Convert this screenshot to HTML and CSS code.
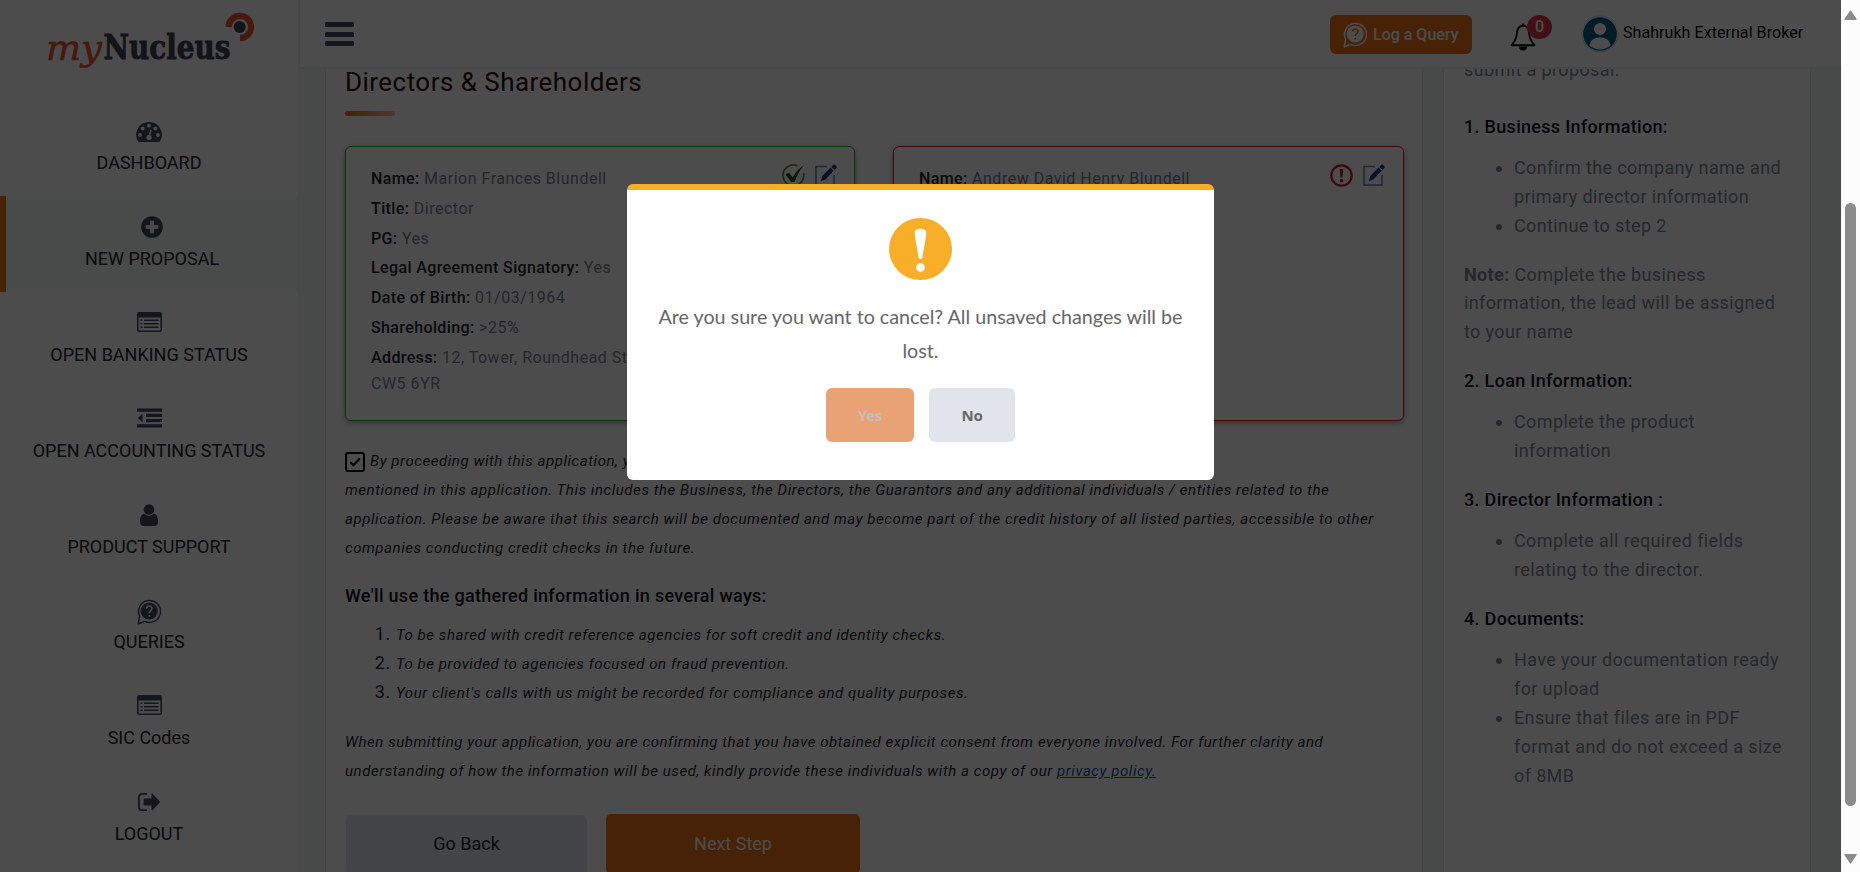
FILE: index.html
```html
<!DOCTYPE html>
<html lang="en">
<head>
<meta charset="utf-8">
<title>myNucleus - New Proposal</title>
<link rel="stylesheet" href="styles.css">
</head>
<body>
<svg class="sprite" width="0" height="0" aria-hidden="true">
  <symbol id="i-list" viewBox="0 0 25 20">
    <path fill-rule="evenodd" d="M2 0h21a2 2 0 0 1 2 2v16a2 2 0 0 1-2 2H2a2 2 0 0 1-2-2V2a2 2 0 0 1 2-2zM1.600 5.600v12.100c0 .4.3.7.7.7h20.400c.4 0 .7-.3.7-.7V5.600z"/>
    <path d="M3.500 7.500h2v1.500h-2zM7 7.500h14.500v1.500H7zM3.500 11h2v1.500h-2zM7 11h14.500v1.500H7zM3.500 14.500h2V16h-2zM7 14.500h14.500V16H7z"/>
  </symbol>
  <symbol id="i-query" viewBox="0 0 24 26">
    <path d="M2.600 17.200A11 11 0 1 1 7.800 22.400L1.300 24.700z" fill="none" stroke="currentColor" stroke-width="1.500" stroke-linejoin="round"/>
    <circle cx="12.200" cy="12" r="8.600"/>
    <path class="q-mark" d="M9.500 9.700c0-3.600 5.600-3.500 5.400-.2-.1 2-2.500 2.200-2.600 4.600M12.300 16v1.800" fill="none" stroke-width="1.600"/>
  </symbol>
  <symbol id="i-edit" viewBox="0 0 22 22">
    <path d="M12 2.500H1v18.600h18V11" fill="none" stroke="#5b7fc0" stroke-width="1.500"/>
    <path fill="#143c93" d="M6 17.200l1.100-4.900 8.400-8.800 3.300 3.200-8.500 8.900zM16.300 2.700L18 1c.8-.8 1.500-.7 2.300 0l.9.900c.8.800.7 1.500 0 2.300l-1.700 1.700z"/>
  </symbol>
</svg>

<div class="window">
  <div class="app">
    <aside class="sidebar">
      <div class="brand">
        <svg width="190" height="70" viewBox="0 0 190 70">
          <text x="6" y="53.500" class="brand-my" textLength="56" lengthAdjust="spacingAndGlyphs">my</text>
          <text x="63.500" y="53" class="brand-name" textLength="127" lengthAdjust="spacingAndGlyphs">Nucleus</text>
        </svg>
        <svg class="brand-mark" width="30" height="30" viewBox="0 0 30 30">
          <path fill="#e8562d" d="M.5 15A14.300 14.300 0 1 1 15 29.300V23A8 8 0 1 0 7 15z"/>
          <circle cx="14.700" cy="15" r="6" fill="#3f4458"/>
        </svg>
      </div>
      <nav class="nav">
        <a class="nav-item"><svg width="26" height="20" viewBox="0 0 26 20"><path d="M13 0A12.800 12.800 0 0 0 2 19.300c.2.500.5.700 1 .7h20c.5 0 .8-.2 1-.7A12.800 12.800 0 0 0 13 0z"/><g fill="#fff"><circle cx="4" cy="13" r="1.900"/><circle cx="6.700" cy="6.500" r="1.900"/><circle cx="13" cy="3.700" r="1.900"/><circle cx="19.300" cy="6.500" r="1.900"/><circle cx="22" cy="13" r="1.900"/><circle cx="13" cy="15.500" r="2.600"/><path d="M12.300 15l1.900-7.500 1.500.4-1.900 7.500z"/></g></svg><span>DASHBOARD</span></a>
        <a class="nav-item active"><svg width="22" height="22" viewBox="0 0 22 22"><circle cx="11" cy="11" r="10.800"/><path d="M9 4.800h4V9h4.200v4H13v4.200H9V13H4.800V9H9z" fill="#f4f9f7"/></svg><span>NEW PROPOSAL</span></a>
        <a class="nav-item"><svg width="25" height="20"><use href="#i-list"/></svg><span>OPEN BANKING STATUS</span></a>
        <a class="nav-item"><svg width="25" height="20" viewBox="0 0 25 20"><path d="M0 .5h25v3.200H0zM9 5.800h16V9H9zM9 11h16v3.200H9zM0 16.300h25v3.200H0zM5.500 5.800v8.400L.8 10z"/></svg><span>OPEN ACCOUNTING STATUS</span></a>
        <a class="nav-item"><svg width="18" height="22" viewBox="0 0 18 22"><circle cx="9" cy="5.500" r="5.300"/><path d="M4.200 9.800C1.200 10 0 13.500 0 17.800 0 20.300 1.300 22 3.500 22h11c2.200 0 3.500-1.700 3.500-4.200 0-4.300-1.200-7.800-4.200-8a6.500 6.500 0 0 1-9.600 0z"/></svg><span>PRODUCT SUPPORT</span></a>
        <a class="nav-item queries"><svg class="q-dark" width="24" height="26"><use href="#i-query"/></svg><span>QUERIES</span></a>
        <a class="nav-item"><svg width="25" height="20"><use href="#i-list"/></svg><span>SIC Codes</span></a>
        <a class="nav-item logout"><svg width="22" height="18" viewBox="0 0 22 18"><path d="M9 .9H4A3.100 3.100 0 0 0 .9 4v10A3.100 3.100 0 0 0 4 17.100h5" fill="none" stroke="currentColor" stroke-width="1.800"/><path d="M6.500 5.500h7V1.300c0-.8.500-1 1.100-.5l7 7.400c.4.500.4 1.100 0 1.600l-7 7.400c-.6.500-1.100.3-1.100-.5v-4.200h-7c-.6 0-.9-.3-.9-.9V6.400c0-.6.300-.9.900-.9z"/></svg><span>LOGOUT</span></a>
      </nav>
    </aside>

    <div class="main">
      <header class="topbar">
        <div class="burger"><i></i><i></i><i></i></div>
        <button class="log-query"><svg class="q-light" width="24" height="26"><use href="#i-query"/></svg>Log a Query</button>
        <div class="bell">
          <svg width="28" height="30" viewBox="0 0 28 30"><path d="M14 1.500v3M14 3.500c-4 .3-5.800 3-6.100 8-.3 5-2 8-5.400 11.700h23c-3.400-3.700-5.100-6.700-5.400-11.700C19.800 6.500 18 3.800 14 3.500z" fill="none" stroke="#000" stroke-width="1.900" stroke-linejoin="round"/><path d="M10 24.500a4 4 0 0 0 8 0z"/></svg>
          <span class="badge">0</span>
        </div>
        <div class="user">
          <svg width="38" height="38" viewBox="0 0 38 38"><circle cx="19" cy="19" r="18" fill="#fff" stroke="#cfd2d6"/><circle cx="19" cy="19" r="16.800" fill="#00608a"/><circle cx="19" cy="14" r="6" fill="#fff"/><path d="M8.500 30.500c1-11 20-11 21 0a16 16 0 0 1-21 0z" fill="#fff"/></svg>
          <span>Shahrukh External Broker</span>
        </div>
      </header>

      <div class="content">
        <section class="panel">
          <h1>Directors &amp; Shareholders</h1>
          <div class="accent"></div>
          <div class="directors">
            <article class="director ok">
              <div class="director-icons">
                <svg width="23" height="23" viewBox="0 0 23 23"><path d="M15.500 1.800A10.400 10.400 0 1 0 21.500 9" fill="none" stroke="#5f8a58" stroke-width="1.700"/><path d="M3.500 10.600l3.400-1.900 3.700 4.500C13.500 8.300 17 4.300 22 1.300c-4.300 5-7 10.200-9.600 16.700H9.300z" fill="#14550f"/></svg>
                <svg width="22" height="22"><use href="#i-edit"/></svg>
              </div>
              <p><b>Name:</b> Marion Frances Blundell</p>
              <p><b>Title:</b> Director</p>
              <p><b>PG:</b> Yes</p>
              <p><b>Legal Agreement Signatory:</b> Yes</p>
              <p><b>Date of Birth:</b> 01/03/1964</p>
              <p><b>Shareholding:</b> &gt;25%</p>
              <p><b>Address:</b> 12, Tower, Roundhead Street,<br>CW5 6YR</p>
            </article>
            <article class="director bad">
              <div class="director-icons">
                <svg width="23" height="23" viewBox="0 0 23 23"><circle cx="11.500" cy="11.500" r="10.200" fill="none" stroke="#d01b22" stroke-width="2.200"/><path d="M9.700 5h3.600l-.7 8.500h-2.200z" fill="#d01b22"/><circle cx="11.500" cy="16.700" r="1.800" fill="#d01b22"/></svg>
                <svg width="22" height="22"><use href="#i-edit"/></svg>
              </div>
              <p><b>Name:</b> Andrew David Henry Blundell</p>
            </article>
          </div>

          <p class="legal"><span class="check"><svg width="12" height="10" viewBox="0 0 12 10"><path d="M1.200 5l3.300 3.300L10.800 1.500" fill="none" stroke="#000" stroke-width="2"/></svg></span>By proceeding with this application, you confirm that we may perform credit searches on all entities<br>mentioned in this application. This includes the Business, the Directors, the Guarantors and any additional individuals / entities related to the<br>application. Please be aware that this search will be documented and may become part of the credit history of all listed parties, accessible to other<br>companies conducting credit checks in the future.</p>
          <h2>We'll use the gathered information in several ways:</h2>
          <ol class="uses">
            <li><span>To be shared with credit reference agencies for soft credit and identity checks.</span></li>
            <li><span>To be provided to agencies focused on fraud prevention.</span></li>
            <li><span>Your client's calls with us might be recorded for compliance and quality purposes.</span></li>
          </ol>
          <p class="legal consent">When submitting your application, you are confirming that you have obtained explicit consent from everyone involved. For further clarity and<br>understanding of how the information will be used, kindly provide these individuals with a copy of our <a>privacy policy.</a></p>
          <div class="actions">
            <button class="back">Go Back</button>
            <button class="next">Next Step</button>
          </div>
        </section>

        <aside class="guide">
          <p class="intro">submit a proposal.</p>
          <h3>1. Business Information:</h3>
          <ul>
            <li>Confirm the company name and<br>primary director information</li>
            <li>Continue to step 2</li>
          </ul>
          <p><b>Note:</b> Complete the business<br>information, the lead will be assigned<br>to your name</p>
          <h3>2. Loan Information:</h3>
          <ul><li>Complete the product<br>information</li></ul>
          <h3>3. Director Information :</h3>
          <ul><li>Complete all required fields<br>relating to the director.</li></ul>
          <h3>4. Documents:</h3>
          <ul>
            <li>Have your documentation ready<br>for upload</li>
            <li>Ensure that files are in PDF<br>format and do not exceed a size<br>of 8MB</li>
          </ul>
        </aside>
      </div>
    </div>

    <div class="overlay"></div>
  </div>

  <div class="scrollbar">
    <svg width="13" height="11" viewBox="0 0 13 11"><path d="M6.500 1.200L12 9.300H1z" fill="#8b8b8b" stroke="#8b8b8b" stroke-width="1.500" stroke-linejoin="round"/></svg>
    <div class="track"><div class="thumb"></div></div>
    <svg width="13" height="11" viewBox="0 0 13 11"><path d="M6.500 9.800L12 1.700H1z" fill="#8b8b8b" stroke="#8b8b8b" stroke-width="1.500" stroke-linejoin="round"/></svg>
  </div>

  <div class="modal" role="dialog">
    <svg width="63" height="62" viewBox="0 0 63 62"><ellipse cx="31.500" cy="31" rx="31.500" ry="31" fill="#f9ae29"/><path d="M25.700 14.500c0-5 11.600-5 11.600 0 0 5-2.600 16-3.900 24.500-.4 2.700-3.400 2.700-3.800 0-1.300-8.500-3.900-19.500-3.900-24.500z" fill="#fff"/><circle cx="31.500" cy="49.500" r="4.300" fill="#fff"/></svg>
    <p>Are you sure you want to cancel? All unsaved changes will be<br>lost.</p>
    <div class="modal-actions">
      <button class="yes">Yes</button>
      <button class="no">No</button>
    </div>
  </div>
</div>
</body>
</html>
```
FILE: styles.css
```css
* { box-sizing: border-box; }
html, body { margin: 0; height: 100%; overflow: hidden; }
body { font-family: Roboto, "Liberation Sans", sans-serif; color: #212529; background: #fff; }
h1, h2, h3, p, ul, ol { margin: 0; padding: 0; }
button { border: 0; font-family: inherit; padding: 0; }
svg { display: block; flex: none; }
.sprite { position: absolute; }

.window { display: flex; position: relative; width: 1860px; height: 872px; overflow: hidden; }
.app { display: flex; position: relative; width: 1841px; height: 872px; }
.overlay { position: absolute; inset: 0; background: rgba(0, 0, 0, .7); }

/* Sidebar */
.sidebar { flex: none; width: 300px; border-right: 2px solid #f0f1f2; background: #fff; }
.brand { position: relative; height: 100px; padding: 6px 0 0 40px; }
.brand svg { overflow: visible; }
.brand .brand-mark { position: absolute; left: 225px; top: 12px; }
.brand-my { font: italic 36px "DejaVu Serif", serif; fill: #e8562d; stroke: #e8562d; stroke-width: .6px; }
.brand-name { font: bold 33px "DejaVu Serif", serif; fill: #3f4458; stroke: #3f4458; stroke-width: .9px; }
.nav-item { display: flex; flex-direction: column; align-items: center; height: 96px; padding-top: 22px; font-size: 18px; line-height: 20px; color: #212529; }
.nav-item svg { color: #454b64; fill: #454b64; }
.nav-item span { margin-top: auto; margin-bottom: 23px; }
.nav-item.active { background: #f4f9f7; border-left: 6px solid #ed7418; padding-top: 20px; }
.nav-item.active ~ .nav-item { padding-top: 20px; }
.nav-item.queries ~ .nav-item span, .nav-item.queries span { margin-bottom: 24px; }
.nav-item.active ~ .queries { padding-top: 19px; }
.nav-item.queries ~ .nav-item { padding-top: 19px; }
.nav-item.queries ~ .logout { padding-top: 21px; }
.q-dark { --mark: #fff; }
.q-light { --mark: #ed7418; fill: #fff; color: #fff; }
.q-mark { stroke: var(--mark); }

/* Top bar */
.main { display: flex; flex-direction: column; width: 1541px; height: 872px; background: #f1f6f5; }
.topbar { display: flex; flex: none; align-items: flex-start; height: 69px; padding-left: 25px; background: #fff; border-bottom: 2px solid #efefef; }
.burger { display: flex; flex-direction: column; gap: 4.700px; width: 29px; margin: 22px 976px 0 0; }
.burger i { height: 5px; border-radius: 1.500px; background: #454b64; }
.log-query { display: flex; align-items: center; gap: 6px; width: 142px; height: 39px; margin-top: 15px; padding-left: 13px; border-radius: 6px; background: #ed7418; color: #fff; font-size: 16px; font-weight: 500; white-space: nowrap; }
.bell { position: relative; width: 28px; margin: 22px 0 0 37px; }
.badge { position: absolute; left: 18px; top: -7px; width: 25px; height: 24px; border-radius: 50%; background: #dc3545; color: #fff; font-size: 16px; font-weight: 500; line-height: 24px; text-align: center; }
.user { display: flex; gap: 4px; margin: 15px 0 0 44px; font-size: 16px; line-height: 36px; letter-spacing: .06px; color: #000; white-space: nowrap; }

/* Content */
.content { display: flex; flex: 1; gap: 20px; height: 803px; padding-left: 25px; overflow: hidden; }
.panel { flex: none; width: 1098px; height: 900px; padding: 0 18px 0 19px; background: #fff; border: solid #dfe6e4; border-width: 0 1px; }
.panel h1 { height: 42px; font-size: 26px; font-weight: 400; line-height: 26px; letter-spacing: .46px; color: #2a0d04; }
.accent { width: 50px; height: 5px; border-radius: 3px; background: linear-gradient(90deg, #ed6a10, #f6c0a0); }
.directors { display: flex; gap: 38px; margin-top: 30px; }
.director { position: relative; width: 510px; height: 275px; padding: 19px 25px; border: 1px solid #3da81c; border-radius: 6px; box-shadow: 0 2px 6px rgba(0, 0, 0, .35); font-size: 16px; line-height: 26px; letter-spacing: .5px; color: #7b808c; }
.director.bad { width: 511px; border-color: #f00a14; }
.director p { margin-bottom: 3.800px; white-space: nowrap; }
.director b { font-weight: 500; letter-spacing: .38px; color: #212529; }
.director-icons { position: absolute; right: 17px; top: 17px; display: flex; gap: 10px; }
.bad .director-icons { right: 18px; }
.legal { height: 116px; margin-top: 26px; font-size: 15px; font-style: italic; line-height: 29px; letter-spacing: .56px; white-space: nowrap; color: #212529; }
.check { display: inline-flex; align-items: center; justify-content: center; width: 20px; height: 20px; margin-right: 5px; border: 2px solid #000; border-radius: 3px; vertical-align: -5px; transform: translateY(-4px); }
.panel h2 { margin-top: 19px; font-size: 18px; font-weight: 500; line-height: 28px; letter-spacing: .3px; color: #0c0d1c; white-space: nowrap; }
.uses { margin-top: 9px; padding-left: 51px; }
.uses li { height: 29px; font-size: 18px; line-height: 29px; letter-spacing: .6px; }
.uses span { font-size: 15px; font-style: italic; letter-spacing: .56px; }
.consent { height: 58px; margin-top: 22px; }
.consent a { color: #1d49b8; text-decoration: underline; }
.actions { display: flex; gap: 19px; margin-top: 28px; padding-left: 1px; }
.actions button { height: 59px; padding-bottom: 2px; border-radius: 5px; font-size: 18px; }
.actions .back { width: 241px; margin-top: 1px; background: #e0e3ea; color: #212529; }
.actions .next { width: 254px; height: 60px; background: #ed7418; color: #fff; }

/* Guide */
.guide { flex: none; width: 368px; height: 900px; padding-left: 20px; background: #fff; border: solid #dfe6e4; border-width: 0 1px; font-size: 18px; line-height: 28.800px; letter-spacing: .38px; color: #7b8790; white-space: nowrap; }
.guide .intro { margin-top: -13px; }
.guide h3 { margin-top: 20px; font-size: 18px; font-weight: 500; line-height: 28.800px; letter-spacing: .3px; color: #0c0d1c; }
.guide .intro + h3 { margin-top: 28px; }
.guide ul { margin: 12.600px 0 20px; padding-left: 50px; }

/* Confirm dialog */
.modal { position: absolute; left: 627px; top: 184px; display: flex; flex-direction: column; align-items: center; width: 587px; height: 296px; padding-top: 28px; border-top: 6px solid #f9ae29; border-radius: 6px; background: #fff; }
.modal p { margin-top: 20px; font: 19.720px/34px Lato, sans-serif; text-align: center; color: #666; white-space: nowrap; }
.modal-actions { display: flex; gap: 15px; margin-top: 20px; }
.modal button { height: 54px; border-radius: 6px; font: bold 15px "Noto Sans", sans-serif; letter-spacing: -.3px; }
.modal .yes { width: 88px; background: #e8a274; color: #c4bfbc; }
.modal .no { width: 86px; background: #e1e4ea; color: #666; }

/* Scrollbar */
.scrollbar { display: flex; flex-direction: column; align-items: center; justify-content: space-between; width: 19px; padding: 10px 0 8px; background: #fcfcfc; }
.track { flex: 1; width: 11px; padding-top: 182px; }
.thumb { width: 11px; height: 603px; border-radius: 6px; background: #8b8b8b; }
```
